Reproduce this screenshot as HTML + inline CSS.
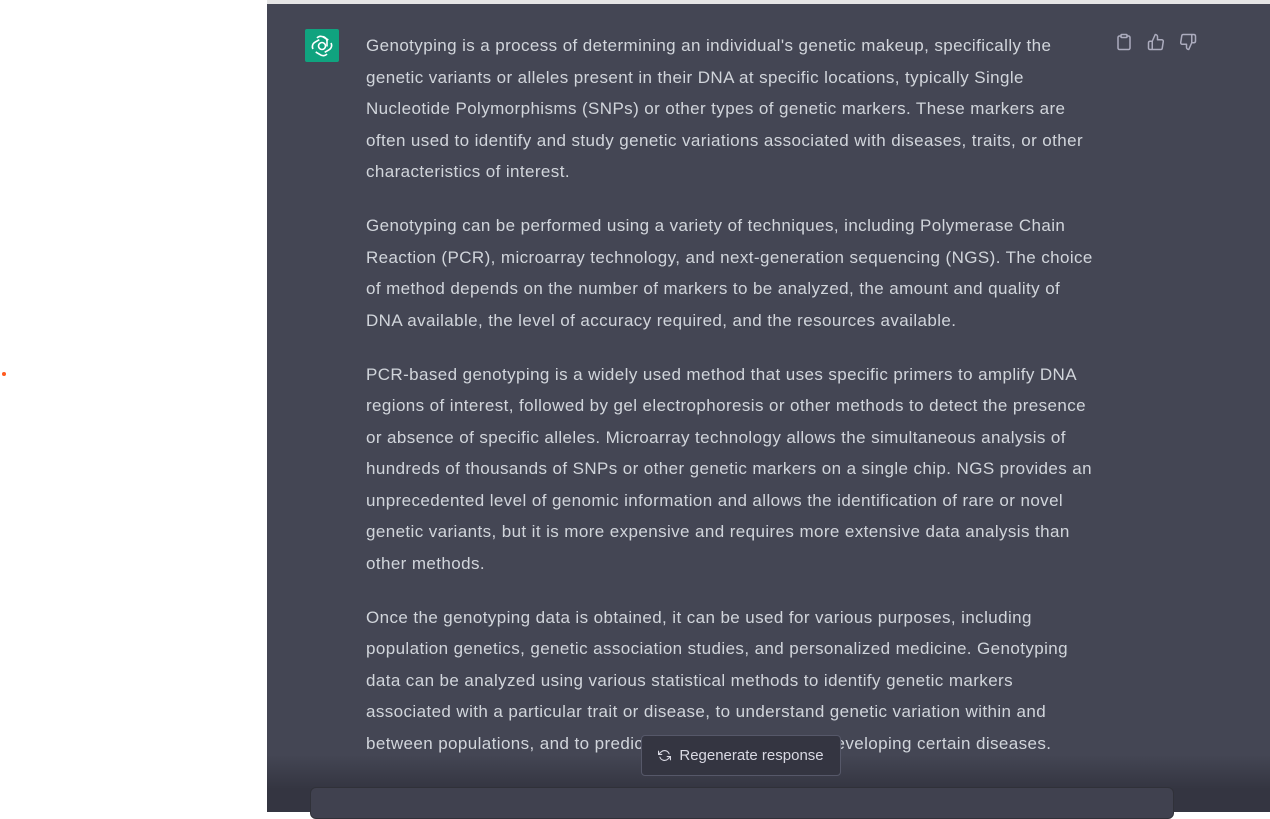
<!DOCTYPE html>
<html><head><meta charset="utf-8"><style>
html,body{margin:0;padding:0;width:1270px;height:812px;overflow:hidden;background:#fff;font-family:"Liberation Sans",sans-serif}
.panel{position:absolute;left:267px;top:4px;width:1003px;height:808px;background:#444654}
.strip{position:absolute;left:267px;top:0;width:1003px;height:4px;background:#e5e5e5}
.logo{position:absolute;left:305px;top:29px;width:34px;height:33px;background:#10a37f;border-radius:2px;display:flex;align-items:center;justify-content:center}
.text{position:absolute;left:366px;top:30px;color:#d1d5db;font-size:17px;letter-spacing:0.4px;line-height:31.5px;white-space:nowrap}
.text p{margin:0 0 22.5px 0}
.icons{position:absolute;left:1115px;top:33px;display:flex;gap:14px}
.fade{position:absolute;left:267px;top:755px;width:1003px;height:57px;background:linear-gradient(rgba(52,53,65,0),#343541 60%)}
.btn{position:absolute;left:641px;top:735px;width:200px;height:41px;box-sizing:border-box;border:1px solid #565869;border-radius:4px;background:#343541;color:#d9d9e3;font-size:15px;display:flex;align-items:center;justify-content:center;gap:8px}
.input{position:absolute;left:310px;top:787px;width:862px;height:30px;background:#40414f;border-radius:6px;border:1px solid #303139}
.dot{position:absolute;left:2px;top:372px;width:4px;height:4px;border-radius:50%;background:#ff5a1f}
</style></head><body>
<div class="strip"></div>
<div class="panel"></div>
<div class="dot"></div>
<div class="logo"><svg width="24" height="24" viewBox="0 0 24 24" fill="none" stroke="#fff" stroke-width="1.6"><circle cx="12" cy="12" r="3.5"/><path d="M12 2.5a5 5 0 0 1 5 5v5M21 9a5 5 0 0 1-2 6.8l-4.3 2.5M17 20a5 5 0 0 1-7 0.5l-4.3-2.5M3 15a5 5 0 0 1 2-6.8l4.3-2.5M7 4a5 5 0 0 1 7-0.5l4.3 2.5"/></svg></div>
<div class="text">
<p>Genotyping is a process of determining an individual's genetic makeup, specifically the<br>genetic variants or alleles present in their DNA at specific locations, typically Single<br>Nucleotide Polymorphisms (SNPs) or other types of genetic markers. These markers are<br>often used to identify and study genetic variations associated with diseases, traits, or other<br>characteristics of interest.</p>
<p>Genotyping can be performed using a variety of techniques, including Polymerase Chain<br>Reaction (PCR), microarray technology, and next-generation sequencing (NGS). The choice<br>of method depends on the number of markers to be analyzed, the amount and quality of<br>DNA available, the level of accuracy required, and the resources available.</p>
<p>PCR-based genotyping is a widely used method that uses specific primers to amplify DNA<br>regions of interest, followed by gel electrophoresis or other methods to detect the presence<br>or absence of specific alleles. Microarray technology allows the simultaneous analysis of<br>hundreds of thousands of SNPs or other genetic markers on a single chip. NGS provides an<br>unprecedented level of genomic information and allows the identification of rare or novel<br>genetic variants, but it is more expensive and requires more extensive data analysis than<br>other methods.</p>
<p>Once the genotyping data is obtained, it can be used for various purposes, including<br>population genetics, genetic association studies, and personalized medicine. Genotyping<br>data can be analyzed using various statistical methods to identify genetic markers<br>associated with a particular trait or disease, to understand genetic variation within and<br>between populations, and to predict the risk of individuals developing certain diseases.</p>
</div>
<div class="icons">
<svg width="18" height="18" viewBox="0 0 24 24" fill="none" stroke="#acacbe" stroke-width="2" stroke-linecap="round" stroke-linejoin="round"><path d="M16 4h2a2 2 0 0 1 2 2v14a2 2 0 0 1-2 2H6a2 2 0 0 1-2-2V6a2 2 0 0 1 2-2h2"/><rect x="8" y="2" width="8" height="4" rx="1"/></svg>
<svg width="18" height="18" viewBox="0 0 24 24" fill="none" stroke="#acacbe" stroke-width="2" stroke-linecap="round" stroke-linejoin="round"><path d="M14 9V5a3 3 0 0 0-3-3l-4 9v11h11.3a2 2 0 0 0 2-1.7l1.4-9a2 2 0 0 0-2-2.3zM7 22H4a2 2 0 0 1-2-2v-7a2 2 0 0 1 2-2h3"/></svg>
<svg width="18" height="18" viewBox="0 0 24 24" fill="none" stroke="#acacbe" stroke-width="2" stroke-linecap="round" stroke-linejoin="round"><path d="M10 15v4a3 3 0 0 0 3 3l4-9V2H5.7a2 2 0 0 0-2 1.7l-1.4 9a2 2 0 0 0 2 2.3zm7-13h2.7A2.3 2.3 0 0 1 22 4v7a2.3 2.3 0 0 1-2.3 2H17"/></svg>
</div>
<div class="fade"></div>
<div class="btn"><svg width="13" height="13" viewBox="0 0 24 24" fill="none" stroke="#d9d9e3" stroke-width="2" stroke-linecap="round"><path d="M1 4v6h6M23 20v-6h-6"/><path d="M20.5 9A9 9 0 0 0 5.6 5.6L1 10m22 4-4.6 4.4A9 9 0 0 1 3.5 15"/></svg>Regenerate response</div>
<div class="input"></div>
</body></html>
